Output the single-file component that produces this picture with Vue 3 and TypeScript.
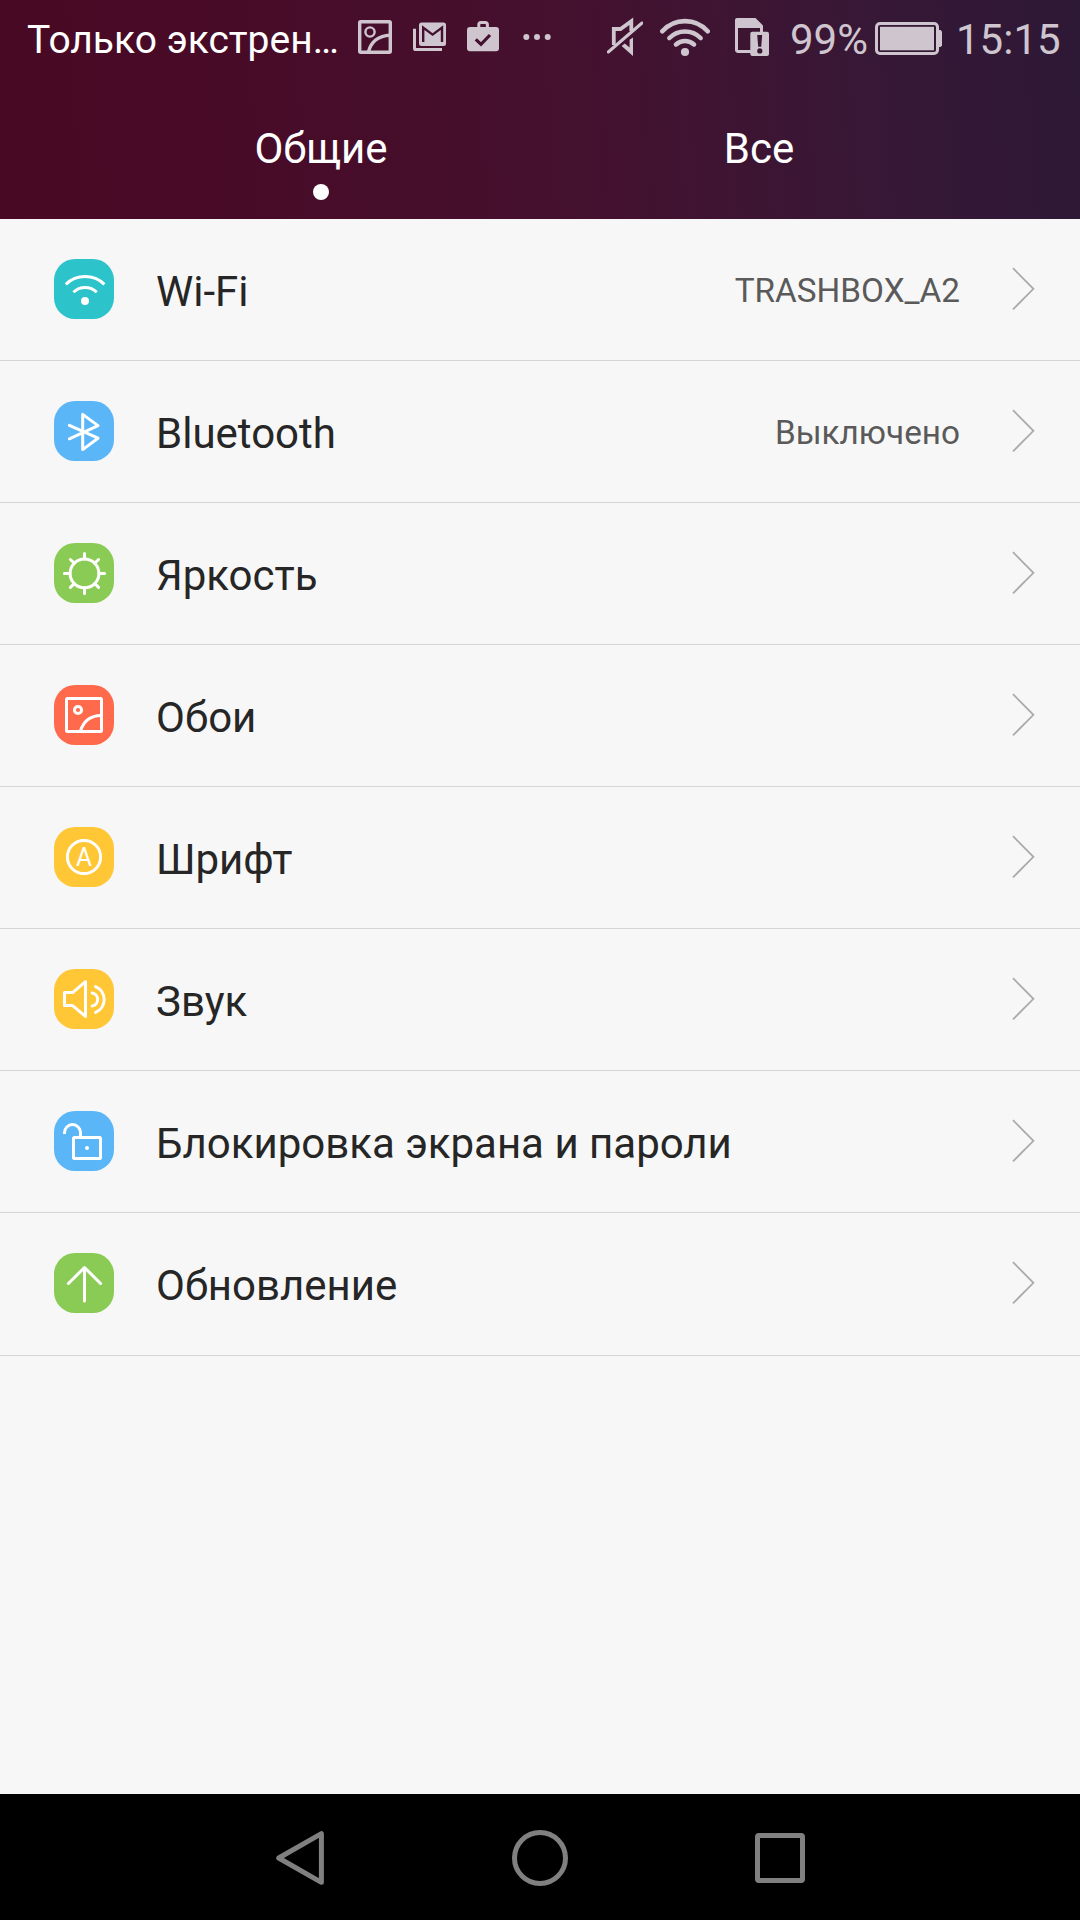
<script setup lang="ts">
type IconName = 'wifi' | 'bluetooth' | 'brightness' | 'wallpaper' | 'font' | 'sound' | 'lock' | 'update'

interface SettingItem {
  icon: IconName
  label: string
  value?: string
}

const items: SettingItem[] = [
  { icon: 'wifi', label: 'Wi-Fi', value: 'TRASHBOX_A2' },
  { icon: 'bluetooth', label: 'Bluetooth', value: 'Выключено' },
  { icon: 'brightness', label: 'Яркость' },
  { icon: 'wallpaper', label: 'Обои' },
  { icon: 'font', label: 'Шрифт' },
  { icon: 'sound', label: 'Звук' },
  { icon: 'lock', label: 'Блокировка экрана и пароли' },
  { icon: 'update', label: 'Обновление' },
]
</script>

<template>
  <div class="screen">
    <header class="header">
      <div class="status">
        <span class="carrier">Только экстрен…</span>
        <svg class="glyph picture" width="34" height="72" viewBox="358 0 34 72">
          <rect x="359.7" y="21.7" width="30.6" height="30.6" rx="1" stroke-width="3.4" />
          <circle cx="370" cy="32" r="4.6" stroke-width="2.4" />
          <path d="M368.6 51.5C371 42 378.5 35.6 390 35.2" stroke-width="3.4" />
        </svg>
        <svg class="glyph mail" width="34" height="72" viewBox="413 0 34 72">
          <path d="M414.5 28.7V48.2a1.4 1.4 0 0 0 1.4 1.4H442" stroke-width="3" />
          <rect class="solid" x="419" y="22.5" width="27" height="23.5" rx="2.5" />
          <path class="cut" d="M423.2 42V27.6L432.6 34.6L442 27.6V42" stroke-width="2.4" />
        </svg>
        <svg class="glyph bag" width="32" height="72" viewBox="467 0 32 72">
          <rect class="solid" x="467" y="27" width="32" height="24.3" rx="3" />
          <path d="M478.8 28V24.4a1.9 1.9 0 0 1 1.9-1.9h4.8a1.9 1.9 0 0 1 1.9 1.9V28" stroke-width="3" />
          <path class="cut" d="M475.8 39.3L481 44.3L490 35" stroke-width="3.2" />
        </svg>
        <svg class="glyph more" width="28" height="72" viewBox="523 0 28 72">
          <circle class="solid" cx="526.3" cy="37" r="3" />
          <circle class="solid" cx="537" cy="37" r="3" />
          <circle class="solid" cx="547.7" cy="37" r="3" />
        </svg>
        <svg class="glyph mute" width="36" height="72" viewBox="607 0 36 72">
          <path d="M613.8 45V29H620.5L631.3 21.2V31" stroke-width="3.8" />
          <path class="solid" d="M633 37.4V56L621.6 46L624.8 43.4L629.6 47.6V39.8Z" />
          <path d="M608.3 52L642 23" stroke-width="3" stroke-linecap="round" />
        </svg>
        <svg class="glyph wlan" width="50" height="72" viewBox="660 0 50 72">
          <path d="M662.3 31.3A30.4 30.4 0 0 1 707.7 31.3" stroke-width="4.6" stroke-linecap="round" />
          <path d="M669.4 38A21.8 21.8 0 0 1 700.6 38" stroke-width="4.6" stroke-linecap="round" />
          <path d="M676 44.4A13.8 13.8 0 0 1 694 44.4" stroke-width="4.6" stroke-linecap="round" />
          <circle class="solid" cx="685" cy="52" r="4.1" />
        </svg>
        <svg class="glyph sim" width="34" height="72" viewBox="735 0 34 72">
          <path d="M736.5 20.5V50a1.5 1.5 0 0 0 1.5 1.5H751M761.5 26V32" stroke-width="3" />
          <path class="solid" d="M737 18H755.5L763 25.6V28H735V20a2 2 0 0 1 2-2Z" />
          <rect class="solid" x="750.3" y="31.8" width="18.7" height="24.2" rx="2" />
          <path class="hole" d="M757.2 35h5l-1 11.8h-3Z" />
          <circle class="hole" cx="759.8" cy="50.9" r="2.6" />
        </svg>
        <span class="percent">99%</span>
        <svg class="glyph battery" width="67" height="72" viewBox="875 0 67 72">
          <rect x="876.5" y="23.5" width="61" height="30" rx="3.5" stroke-width="3" />
          <rect class="solid" x="880" y="26.8" width="54" height="23.5" />
          <path class="solid" d="M939 30h1.5l1.5 1.5v14l-1.5 1.5H939Z" />
        </svg>
        <span class="clock">15:15</span>
      </div>
      <nav class="tabs">
        <div class="tab"><span class="tab-label">Общие</span><i class="dot"></i></div>
        <div class="tab"><span class="tab-label">Все</span></div>
      </nav>
    </header>

    <main class="list">
      <div v-for="item in items" :key="item.icon" class="row">
        <svg class="icon" :class="item.icon" width="60" height="60" viewBox="0 0 60 60">
          <g v-if="item.icon === 'wifi'">
            <path d="M11.8 25.4A27.8 27.8 0 0 1 50.4 25.4M19.4 33.2A16.7 16.7 0 0 1 42.8 33.2" />
            <circle class="fill" cx="31" cy="42" r="4" />
          </g>
          <path v-else-if="item.icon === 'bluetooth'" d="M15.4 37.8L44 24.6L28.7 13.4V48.6L44 37.2L15.4 24.4" />
          <g v-else-if="item.icon === 'brightness'">
            <circle cx="30.5" cy="30.4" r="14.4" />
            <path d="M30.5 10.4V16M30.5 45V50.4M10.4 30.4H16M45 30.4H50.6M16.4 16.5L20.3 20.2M44.6 16.5L40.7 20.2M16.4 44.4L20.3 40.6M44.6 44.4L40.7 40.6" />
          </g>
          <g v-else-if="item.icon === 'wallpaper'">
            <rect x="12.5" y="13.5" width="35" height="33" rx="1" />
            <circle cx="24" cy="25" r="3.6" />
            <path d="M26.4 46C29.2 37 36 30.6 47 30.4" />
          </g>
          <g v-else-if="item.icon === 'font'">
            <circle cx="30" cy="30" r="16.6" />
            <text x="30" y="39" text-anchor="middle" textLength="16" lengthAdjust="spacingAndGlyphs">A</text>
          </g>
          <g v-else-if="item.icon === 'sound'">
            <path d="M10.5 23.6H18.6L31.5 12.6V47.4L18.6 36.6H10.5Z" />
            <path d="M38.2 24A6.6 6.6 0 0 1 38.2 37M41.6 17.6A14 14 0 0 1 41.6 43.4" />
          </g>
          <g v-else-if="item.icon === 'lock'">
            <path stroke-linecap="butt" d="M10.5 23V21.6A8 8 0 0 1 26.5 21.6V26" />
            <rect x="19.5" y="26.5" width="27" height="21" rx="1" />
            <circle class="fill" cx="33" cy="37" r="2" />
          </g>
          <path v-else d="M30.5 48V14.5M14.4 30.5L30.5 14.5L46.6 30.5" />
        </svg>
        <span class="label">{{ item.label }}</span>
        <span v-if="item.value" class="value">{{ item.value }}</span>
        <svg class="chevron" width="24" height="44" viewBox="0 0 24 44">
          <path d="M1 1.2L21.4 21.8L1 42.4" />
        </svg>
      </div>
    </main>

    <footer class="navbar">
      <svg width="60" height="60" viewBox="0 0 60 60"><path d="M8.7 30L51.4 5.7V54.3Z" /></svg>
      <svg width="60" height="60" viewBox="0 0 60 60"><circle cx="30" cy="30" r="25.5" /></svg>
      <svg width="60" height="60" viewBox="0 0 60 60"><rect x="7.5" y="7.5" width="45" height="45" rx="1.5" /></svg>
    </footer>
  </div>
</template>

<style>
body {
  margin: 0;
  background: #f7f7f7;
}
</style>

<style scoped>
.screen {
  display: flex;
  flex-direction: column;
  width: 1080px;
  height: 1920px;
  overflow: hidden;
  background: #f7f7f7;
  font-family: Roboto, "Noto Sans", sans-serif;
}
.header {
  flex: none;
  height: 219px;
  background: linear-gradient(86deg, #480924 0%, #480b27 22%, #44112f 54%, #361836 82%, #2d1836 100%);
}
.status {
  display: flex;
  height: 72px;
  color: #cfc5ce;
  white-space: nowrap;
}
.carrier {
  flex: none;
  box-sizing: border-box;
  width: 358px;
  padding-left: 27px;
  color: #fff;
  font-size: 39px;
  line-height: 80px;
}
.glyph {
  flex: none;
  display: block;
  fill: none;
  stroke: #cfc5ce;
}
.glyph .solid {
  fill: #cfc5ce;
  stroke: none;
}
.glyph .cut {
  stroke: #43102f;
}
.glyph .hole {
  fill: #3b1534;
  stroke: none;
}
.mail { margin-left: 21px; }
.bag { margin-left: 20px; }
.more { margin-left: 24px; }
.mute { margin-left: 56px; }
.wlan { margin-left: 17px; }
.sim { margin-left: 25px; }
.percent,
.clock {
  flex: none;
  font-size: 42px;
  line-height: 79px;
}
.percent {
  width: 85px;
  margin-left: 21px;
}
.clock {
  margin-left: 14px;
}
.tabs {
  display: flex;
  height: 147px;
  padding: 0 102px;
}
.tab {
  flex: 1;
  display: flex;
  flex-direction: column;
  align-items: center;
  color: #fff;
}
.tab-label {
  margin-top: 52px;
  font-size: 42px;
  line-height: 49px;
}
.dot {
  width: 16px;
  height: 16px;
  margin-top: 11px;
  border-radius: 50%;
  background: #fff;
}
.list {
  flex: 1;
}
.row {
  display: flex;
  align-items: flex-start;
  box-sizing: border-box;
  height: 142px;
  padding: 40px 44px 0 54px;
  border-bottom: 1px solid #d6d6d6;
}
.row:last-child {
  height: 143px;
}
.icon {
  flex: none;
  border-radius: 21px;
  fill: none;
  stroke: #fff;
  stroke-width: 3;
  stroke-linecap: round;
  stroke-linejoin: round;
}
.icon .fill {
  fill: #fff;
  stroke: none;
}
.icon text {
  fill: #fff;
  stroke: none;
  font-size: 26px;
}
.wifi { background: #2dc3cb; stroke-linecap: butt; }
.bluetooth, .lock { background: #5bb6f7; }
.brightness, .update { background: #8acb56; }
.wallpaper { background: #ff6a4d; }
.font, .sound { background: #ffc735; }
.label {
  flex: 1;
  margin-left: 42px;
  color: #262626;
  font-size: 42px;
  line-height: 65px;
}
.value {
  margin-right: 52px;
  color: #5a5a5a;
  font-size: 33.3px;
  line-height: 63px;
}
.chevron {
  flex: none;
  margin-top: 8px;
  fill: none;
  stroke: #ababab;
  stroke-width: 1.8;
}
.navbar {
  flex: none;
  display: flex;
  align-items: center;
  justify-content: center;
  gap: 180px;
  box-sizing: border-box;
  height: 126px;
  padding-top: 2px;
  background: #000;
}
.navbar svg {
  fill: none;
  stroke: #808080;
  stroke-width: 5;
  stroke-linejoin: round;
}
</style>
